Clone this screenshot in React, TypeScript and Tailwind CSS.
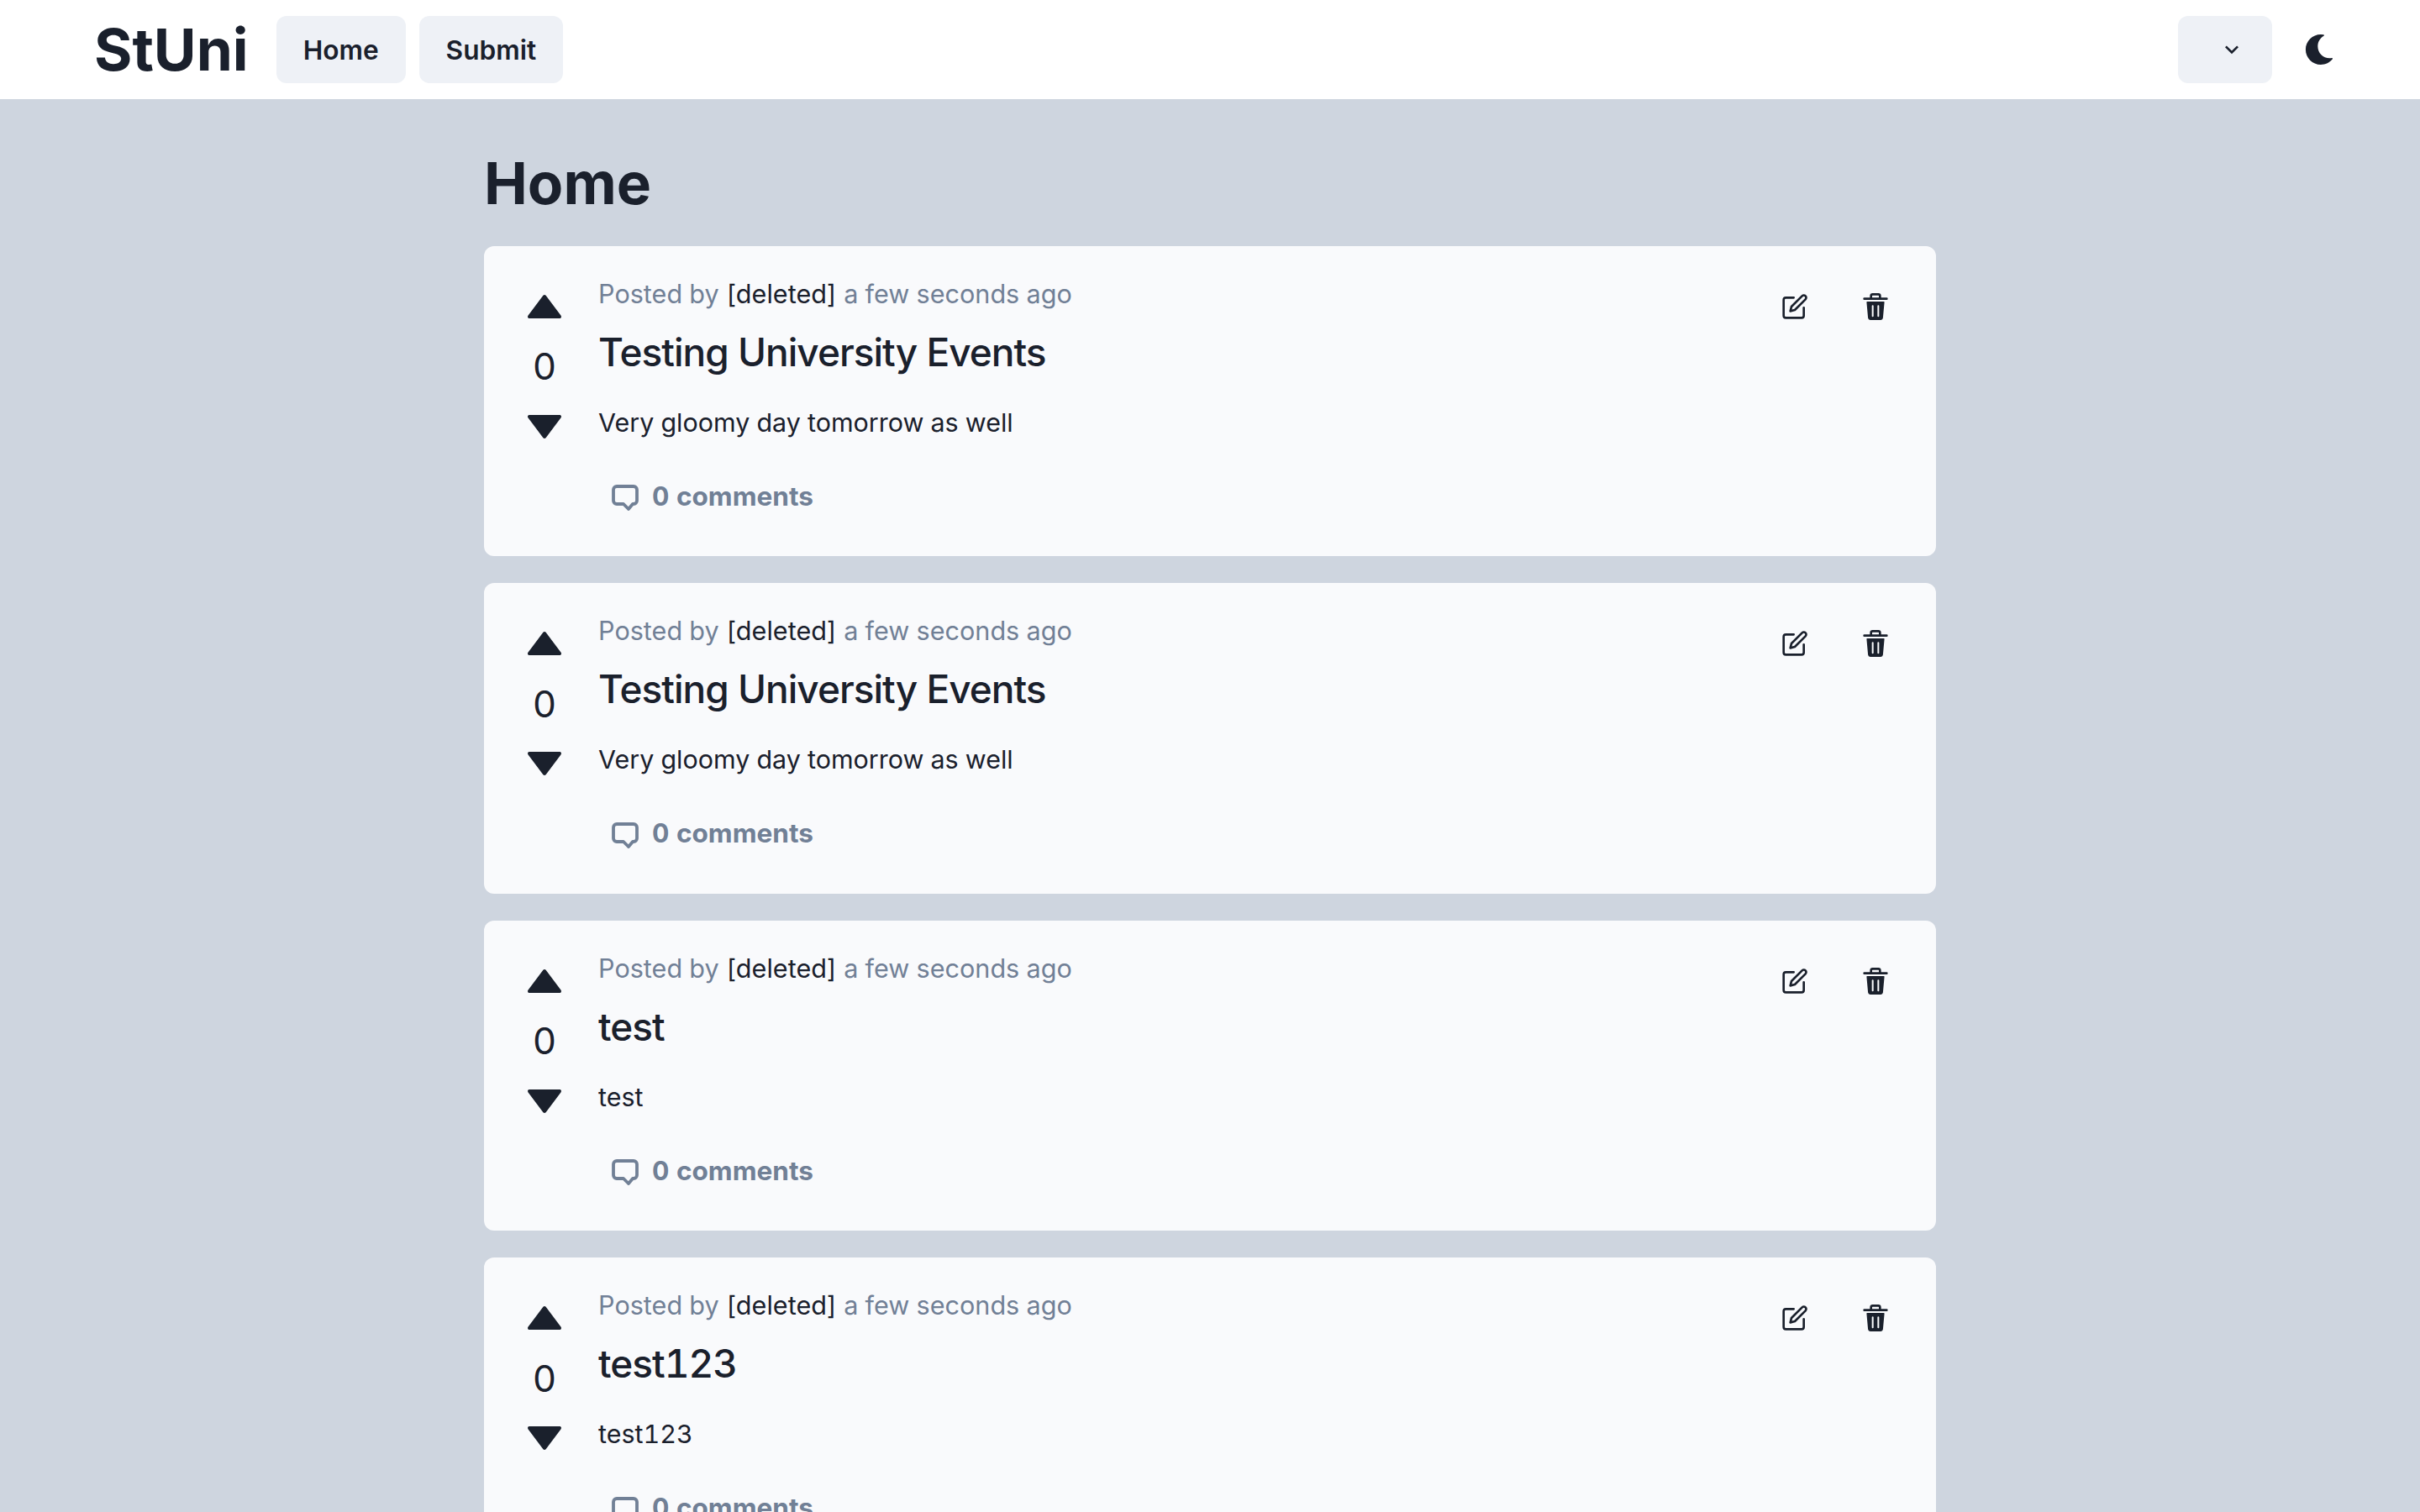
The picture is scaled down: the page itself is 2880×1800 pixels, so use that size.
import { FaMoon } from "react-icons/fa";

const posts = [
  { title: "Testing University Events", body: "Very gloomy day tomorrow as well" },
  { title: "Testing University Events", body: "Very gloomy day tomorrow as well" },
  { title: "test", body: "test" },
  { title: "test123", body: "test123" },
];

function TriangleUp() {
  return (
    <svg viewBox="0 0 24 24" className="w-12 h-12" fill="currentColor">
      <path d="M12.8,5.4c-0.377-0.504-1.223-0.504-1.6,0l-9,12c-0.228,0.303-0.264,0.708-0.095,1.047 C2.275,18.786,2.621,19,3,19h18c0.379,0,0.725-0.214,0.895-0.553c0.169-0.339,0.133-0.744-0.095-1.047L12.8,5.4z" />
    </svg>
  );
}

function TriangleDown() {
  return (
    <svg viewBox="0 0 24 24" className="w-12 h-12" fill="currentColor">
      <path d="M21,5H3C2.621,5,2.275,5.214,2.105,5.553C1.937,5.892,1.973,6.297,2.2,6.6l9,12 c0.188,0.252,0.485,0.4,0.8,0.4s0.611-0.148,0.8-0.4l9-12c0.228-0.303,0.264-0.708,0.095-1.047C21.725,5.214,21.379,5,21,5z" />
    </svg>
  );
}

function Chevron() {
  return (
    <svg viewBox="0 0 24 24" className="w-8 h-8" fill="currentColor">
      <path d="M16.59 8.59L12 13.17 7.41 8.59 6 10l6 6 6-6z" />
    </svg>
  );
}

function Edit() {
  return (
    <svg viewBox="0 0 24 24" className="w-8 h-8" fill="none" stroke="currentColor" strokeWidth="2" strokeLinecap="round" strokeLinejoin="round">
      <path d="M11 4H4a2 2 0 0 0-2 2v14a2 2 0 0 0 2 2h14a2 2 0 0 0 2-2v-7" />
      <path d="M18.5 2.5a2.121 2.121 0 0 1 3 3L12 15l-4 1 1-4 9.5-9.5z" />
    </svg>
  );
}

function Trash() {
  return (
    <svg viewBox="0 0 24 24" className="w-8 h-8" fill="currentColor">
      <path d="M19.452 7.5H4.547a.5.5 0 00-.5.545l1.287 14.136A2 2 0 007.326 24h9.347a2 2 0 001.992-1.819L19.95 8.045a.5.5 0 00-.129-.382.5.5 0 00-.369-.163zm-9.2 13a.75.75 0 01-1.5 0v-9a.75.75 0 011.5 0zm5 0a.75.75 0 01-1.5 0v-9a.75.75 0 011.5 0zM22 4h-4.75a.25.25 0 01-.25-.25V2.5A2.5 2.5 0 0014.5 0h-5A2.5 2.5 0 007 2.5v1.25a.25.25 0 01-.25.25H2a1 1 0 000 2h20a1 1 0 000-2zM9 3.75V2.5a.5.5 0 01.5-.5h5a.5.5 0 01.5.5v1.25a.25.25 0 01-.25.25h-5.5A.25.25 0 019 3.75z" />
    </svg>
  );
}

function Comment() {
  return (
    <svg viewBox="0 0 32 32" className="w-8 h-8 mt-[5px]" fill="none" stroke="currentColor" strokeWidth="3.8" strokeLinejoin="round">
      <path d="M6 2h20a4 4 0 0 1 4 4v13a4 4 0 0 1-4 4h-1l-5 6-6-6H6a4 4 0 0 1-4-4V6a4 4 0 0 1 4-4z" />
    </svg>
  );
}

function PostCard({ title, body }: { title: string; body: string }) {
  return (
    <div className="flex bg-[#F9FAFC] rounded-xl p-8 h-[369.6px] overflow-hidden tabular-nums">
      <div className="w-20 mr-6 flex flex-col items-center shrink-0">
        <div className="w-20 h-20 flex items-center justify-center">
          <TriangleUp />
        </div>
        <div className="h-[63px] flex items-center justify-center text-[44px]">0</div>
        <div className="w-20 h-20 flex items-center justify-center">
          <TriangleDown />
        </div>
      </div>
      <div className="flex-1">
        <div className="text-[30.6px] leading-[48px] text-[#718096] mt-px">
          Posted by <span className="text-[#1A202C]">[deleted]</span> a few seconds ago
        </div>
        <div className="text-[46px] leading-[72px] font-medium tracking-[-1px] mt-[9px]">{title}</div>
        <div className="text-[30.45px] leading-[48px] mt-6">{body}</div>
        <div className="flex items-center gap-4 mt-10 ml-4 text-[#718096] font-bold text-[31.6px] leading-[48px]">
          <Comment />
          0 comments
        </div>
      </div>
      <div className="flex gap-4 shrink-0">
        <div className="w-20 h-20 flex items-center justify-center">
          <Edit />
        </div>
        <div className="w-20 h-20 flex items-center justify-center">
          <Trash />
        </div>
      </div>
    </div>
  );
}

export default function App() {
  return (
    <div className="h-screen overflow-hidden bg-[#CED5DF] text-[#1A202C] font-['Inter',sans-serif]">
      <div className="h-[118px] bg-white flex items-center pl-[112px] pr-20">
        <div className="text-[69.4px] leading-none font-bold mr-[33px] pt-[2px]">StUni</div>
        <div className="flex gap-4">
          <div className="h-20 px-8 pt-[2px] flex items-center rounded-xl bg-[#EEF1F6] text-[31.6px] font-semibold">Home</div>
          <div className="h-20 px-8 pt-[2px] flex items-center rounded-xl bg-[#EEF1F6] text-[31.6px] font-semibold">Submit</div>
        </div>
        <div className="ml-auto flex items-center gap-4">
          <div className="w-28 h-20 px-8 flex items-center justify-end rounded-xl bg-[#EEF1F6]">
            <Chevron />
          </div>
          <div className="w-20 h-20 flex items-center justify-center">
            <FaMoon className="w-9 h-9" />
          </div>
        </div>
      </div>
      <div className="w-3/5 mx-auto">
        <h1 className="text-[69.4px] leading-[108px] font-bold mt-[46px] mb-[20.7px]">Home</h1>
        <div className="flex flex-col gap-8">
          {posts.map((post, i) => (
            <PostCard key={i} title={post.title} body={post.body} />
          ))}
        </div>
      </div>
    </div>
  );
}
